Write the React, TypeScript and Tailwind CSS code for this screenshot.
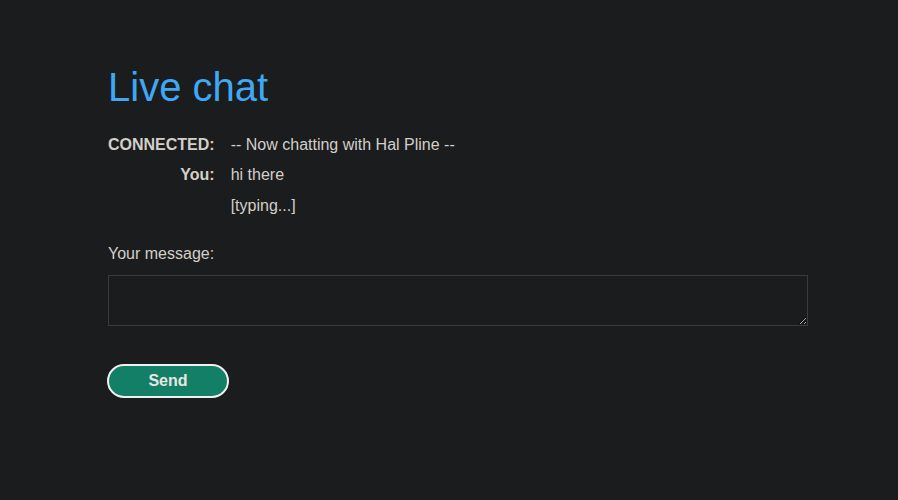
export default function App() {
  return (
    <div
      className="min-h-[500px] w-full bg-[#1b1c1e] text-[#d3cfc9]"
      style={{ fontFamily: '"Liberation Sans", Arial, sans-serif' }}
    >
      <div className="pl-[108px] pt-[64px]">
        <h1 className="text-[40px] leading-[46px] text-[#3ea8f5]">Live chat</h1>
        <div className="mt-[26px] grid grid-cols-[auto_1fr] gap-x-[16px] gap-y-[12px] text-[16px] leading-[18px]">
          <div className="text-right font-bold">CONNECTED:</div>
          <div>-- Now chatting with Hal Pline --</div>
          <div className="text-right font-bold">You:</div>
          <div>hi there</div>
          <div></div>
          <div className="pt-px">[typing...]</div>
        </div>
        <div className="mt-[30px] text-[16px] leading-[18px]">Your message:</div>
        <textarea className="mt-[12px] block h-[51px] w-[700px] border border-[#3a3b3d] bg-[#1b1c1e] text-[#d3cfc9] outline-none" />
        <button className="-ml-px mt-[38px] flex h-[34px] w-[122px] items-center justify-center rounded-full border-2 border-[#f0f0f0] bg-[#137f66] text-[16px] font-bold text-[#e8e6e3]">
          Send
        </button>
      </div>
    </div>
  );
}
